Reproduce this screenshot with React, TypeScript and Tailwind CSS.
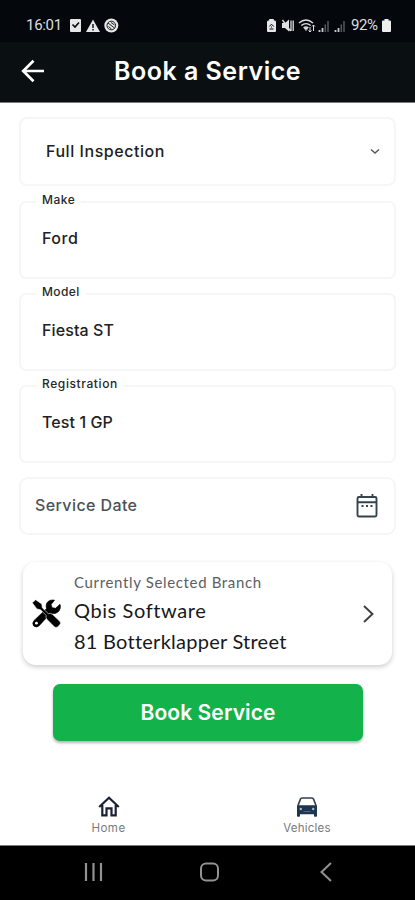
import { useState } from "react";

interface FieldProps {
  label: string;
  value: string;
  labelClass: string;
  valueClass: string;
}

function StatusBar() {
  return (
    <div className="flex h-[42px] items-center bg-[#04080c] pl-[26px] pr-[24px] pt-2 text-[#dedfe0]">
      <span className="w-[43px] font-['Roboto',sans-serif] text-[15px] leading-none tracking-[-0.3px]">
        16:01
      </span>
      <svg className="h-[15px] w-[50px]" viewBox="0 0 50 15" fill="none">
        <rect x="1" y="1" width="11" height="13" rx="1" fill="#e6e7e8" />
        <path d="M3.5 6.5l2.5 2.5 4-4.5" stroke="#04080c" strokeWidth="1.6" />
        <path d="M24 1.5L31 14H17z" fill="#e6e7e8" />
        <path d="M24 6v4M24 11v1.5" stroke="#04080c" strokeWidth="1.4" />
        <circle cx="42.3" cy="7.5" r="7" fill="#e6e7e8" />
        <circle cx="42.3" cy="7.5" r="4.3" stroke="#04080c" strokeWidth="0.9" />
        <path d="M39 5l6.5 5M39.5 8.5l3 2.5M42 4.5l3.5 2.5" stroke="#04080c" strokeWidth="0.9" />
      </svg>
      <svg className="ml-auto h-[15px] w-[83px]" viewBox="0 0 83 15" fill="none">
        <path d="M3.2 1h4.6v1.5H9q1 .4 1 1.5V13q0 1-1 1H2q-1 0-1-1V4q0-1 1-1.500h1.200z" fill="#e6e7e8" />
        <path d="M3.3 8.5l2.200-2.300 2.300 2.300M3.5 11h4M5.5 8.5v1" stroke="#04080c" strokeWidth="1" />
        <path d="M16 5h3l4-3.500v12L19 10h-3z" fill="#dedfe0" />
        <path d="M25 2.5v10.500M27.2 2.5v10.500M16.5 2l8 11" stroke="#dedfe0" strokeWidth="1.3" />
        <path d="M33 5q7-6 14 0M35.3 7.5q4.700-3.800 9.400 0M37.6 10q2.400-1.900 4.800 0" stroke="#dedfe0" strokeWidth="1.4" />
        <path d="M38.5 10.5l1.500 2 1.500-2zM44 14V9m-1.500 3.500l1.500 1.500 1.500-1.500M47.5 13V7m-1.500 1.500l1.500-1.500 1.500 1.500" stroke="#dedfe0" strokeWidth="1" />
        <path d="M53.5 14v-2M56.5 14v-4" stroke="#c6c9cb" strokeWidth="1.8" />
        <path d="M59.3 14V6.500M62 14V3" stroke="#50575d" strokeWidth="1.5" />
        <path d="M69.5 14v-2M72.5 14v-4" stroke="#c6c9cb" strokeWidth="1.8" />
        <path d="M75.3 14V6.500M78 14V3" stroke="#50575d" strokeWidth="1.5" />
      </svg>
      <span className="ml-[2px] w-[31px] font-['Roboto',sans-serif] text-[15px] leading-none tracking-[-0.4px]">
        92%
      </span>
      <svg className="h-[13px] w-[9px]" viewBox="0 0 9 13" fill="#eeeeee">
        <path d="M2.5 0h4v1.500H8q1 0 1 1V12q0 1-1 1H1q-1 0-1-1V2.500q0-1 1-1h1.500z" />
      </svg>
    </div>
  );
}

function Header() {
  return (
    <header className="flex h-[61px] items-center border-b border-[#777b7e] bg-[#0a0f12] pb-[2px] pl-[21px] text-white">
      <button type="button" aria-label="Back">
        <svg className="h-6 w-6" viewBox="0 0 24 24" fill="none" stroke="currentColor" strokeWidth="2.7">
          <path d="M12.5 1.800L2.200 12l10.300 10.200M2.500 12H23" />
        </svg>
      </button>
      <h1 className="ml-[69px] whitespace-nowrap pt-[1px] text-[25px] font-semibold leading-none tracking-[0.5px]">
        Book a Service
      </h1>
    </header>
  );
}

function Field({ label, value, labelClass, valueClass }: FieldProps) {
  return (
    <div className="relative flex h-[78px] items-center rounded-[7px] border-2 border-[#f6f6f7] pb-[5px] pl-[21px]">
      <span
        className={`absolute -top-[12px] left-[15px] bg-white px-[6px] text-[12px] font-medium leading-[18px] text-[#26282a] ${labelClass}`}
      >
        {label}
      </span>
      <span className={`text-[16px] font-medium leading-none text-[#202224] ${valueClass}`}>
        {value}
      </span>
    </div>
  );
}

function ToolsIcon() {
  return (
    <svg className="h-[29px] w-[29px]" viewBox="0 0 29 29" fill="none">
      {/* wrench */}
      <path
        d="M22.500 1.200Q16.800.2 14.600 4.600Q13.700 7 14.600 9.600L1.900 21.700Q-.2 24.500 1.700 26.900Q4.300 29 6.900 26.900L18.600 14.200Q24.500 15.700 27.500 11.200Q29 8.200 28 5.300L23.600 9.300L20 8.700L19.100 5.400z"
        fill="#000"
        stroke="#000"
        strokeWidth="0.7"
      />
      <circle cx="4.400" cy="24.200" r="1.400" fill="#fff" />
      {/* screwdriver */}
      <path
        d="M3.700 .700L9.800 5.100L10.300 8.800L16.300 14.700Q18.800 13.700 20.700 15.500L28 22.500Q29.200 24.300 27.800 25.800L25.500 28Q23.800 29 22.300 27.700L15 20.500Q13.400 18.800 14.200 16.500L8.600 10.800L4.900 9.900L.3 3.800z"
        fill="#000"
        stroke="#fff"
        strokeWidth="0.6"
      />
    </svg>
  );
}

function BottomNav() {
  return (
    <nav className="mt-[53px] flex h-[51px] text-[11.5px] leading-[14px] text-[#777a7e]">
      <div className="flex w-[217px] flex-col items-center pt-[2px]">
        <svg className="h-[21px] w-[22px]" viewBox="0 0 22 21" fill="none" stroke="#1c2036" strokeWidth="2.2">
          <path d="M1.200 11L11 1.800 20.800 11M4.300 9v10.400h4.200v-7h5v7h4.200V9" />
        </svg>
        <span className="mt-1 tracking-[0.5px]">Home</span>
      </div>
      <div className="flex w-[180px] flex-col items-center pt-[3px]">
        <svg className="h-5 w-[22px]" viewBox="0 0 22 20" fill="none">
          <path d="M2 8.500L4.500 2q.4-1 1.500-1h10q1.100 0 1.500 1L20 8.500" stroke="#35404d" strokeWidth="1.7" />
          <path d="M1 8.200h20V19q0 .8-.8.8h-1.400q-.8 0-.8-.8v-1.800H4V19q0 .8-.8.8H1.800Q1 19.800 1 19z" fill="#1d3550" />
          <circle cx="4.800" cy="12" r="1.200" fill="#aebac7" />
          <circle cx="17.200" cy="12" r="1.200" fill="#aebac7" />
          <path d="M7.500 14.500h7" stroke="#52667c" strokeWidth="1" />
        </svg>
        <span className="mt-1 tracking-[0.2px]">Vehicles</span>
      </div>
    </nav>
  );
}

function SystemNav() {
  return (
    <div className="flex h-[55px] items-center border-t border-[#77797b] bg-black pb-[2px]">
      <svg className="ml-[84px] h-5 w-5" viewBox="0 0 20 20" stroke="#929292" strokeWidth="2.2">
        <path d="M2 1v18M9.500 1v18M17 1v18" />
      </svg>
      <svg className="ml-[96px] h-5 w-5" viewBox="0 0 20 20" fill="none" stroke="#929292" strokeWidth="2">
        <rect x="1" y="1.500" width="17" height="17" rx="5" />
      </svg>
      <svg className="ml-[99px] h-5 w-4" viewBox="0 0 16 20" fill="none" stroke="#929292" strokeWidth="2">
        <path d="M12 1L2.500 10l9.500 9" />
      </svg>
    </div>
  );
}

export default function App() {
  const [service] = useState("Full Inspection");

  return (
    <div className="flex h-[900px] w-[415px] flex-col overflow-hidden bg-white font-['Inter',sans-serif]">
      <StatusBar />
      <Header />

      <main className="flex flex-col px-[19px] pt-[14px]">
        <button
          type="button"
          className="flex h-[69px] items-center justify-between rounded-[8px] border-2 border-[#f6f6f7] pb-[2px] pl-[25px] pr-[14px]"
        >
          <span className="text-[16px] font-medium leading-none tracking-[0.55px] text-[#202224]">
            {service}
          </span>
          <svg className="mt-[2px] h-[7px] w-[10px]" viewBox="0 0 10 7" fill="none" stroke="#55585a" strokeWidth="1.5">
            <path d="M1 1.500l4 3.500 4-3.500" />
          </svg>
        </button>

        <div className="mt-[15px] flex flex-col gap-[14px]">
          <Field label="Make" value="Ford" labelClass="tracking-[0.5px]" valueClass="tracking-[0.5px]" />
          <Field label="Model" value="Fiesta ST" labelClass="tracking-[0.4px]" valueClass="tracking-[0.1px]" />
          <Field label="Registration" value="Test 1 GP" labelClass="tracking-[0.6px]" valueClass="tracking-[0.1px]" />
        </div>

        <button
          type="button"
          className="mt-[14px] flex h-[58px] items-center justify-between rounded-[9px] border-2 border-[#f5f6f6] pb-[2px] pl-[14px] pr-[16px]"
        >
          <span className="text-[16px] font-medium leading-none tracking-[0.4px] text-[#4a5357]">
            Service Date
          </span>
          <svg className="mt-[1px] h-6 w-[22px]" viewBox="0 0 22 24" fill="none" stroke="#35434c" strokeWidth="1.9">
            <rect x="1.500" y="3" width="19" height="19.500" rx="1.500" />
            <path d="M1.500 8.300h19M5.500 0v4M16.500 0v4" />
            <path d="M5.500 12h2M10 12h2M14.500 12h2" />
          </svg>
        </button>

        <button
          type="button"
          className="mx-[4px] mt-[27px] flex h-[103px] items-center rounded-[13px] bg-white pl-[9px] pr-[18px] text-left shadow-[0_2px_5px_rgba(0,0,0,0.2)]"
        >
          <ToolsIcon />
          <span className="ml-[13px] flex flex-col whitespace-nowrap font-['Lato',sans-serif] text-[20px] leading-[31px] text-[#17191b]">
            <span className="text-[15px] leading-[25px] tracking-[0.65px] text-[#5c6064]">
              Currently Selected Branch
            </span>
            <span className="tracking-[0.6px]">Qbis Software</span>
            <span className="tracking-[0.25px]">81 Botterklapper Street</span>
          </span>
          <svg className="ml-auto h-[18px] w-[11px]" viewBox="0 0 11 18" fill="none" stroke="#3c3f42" strokeWidth="1.9">
            <path d="M1 1l8.500 8L1 17" />
          </svg>
        </button>

        <button
          type="button"
          className="ml-[34px] mt-[19px] h-[57px] w-[310px] rounded-[7px] bg-[#14b24b] text-[21px] font-semibold leading-none tracking-[0.1px] text-white shadow-[0_2px_3px_rgba(0,0,0,0.3)]"
        >
          Book Service
        </button>
      </main>

      <BottomNav />
      <SystemNav />
    </div>
  );
}
